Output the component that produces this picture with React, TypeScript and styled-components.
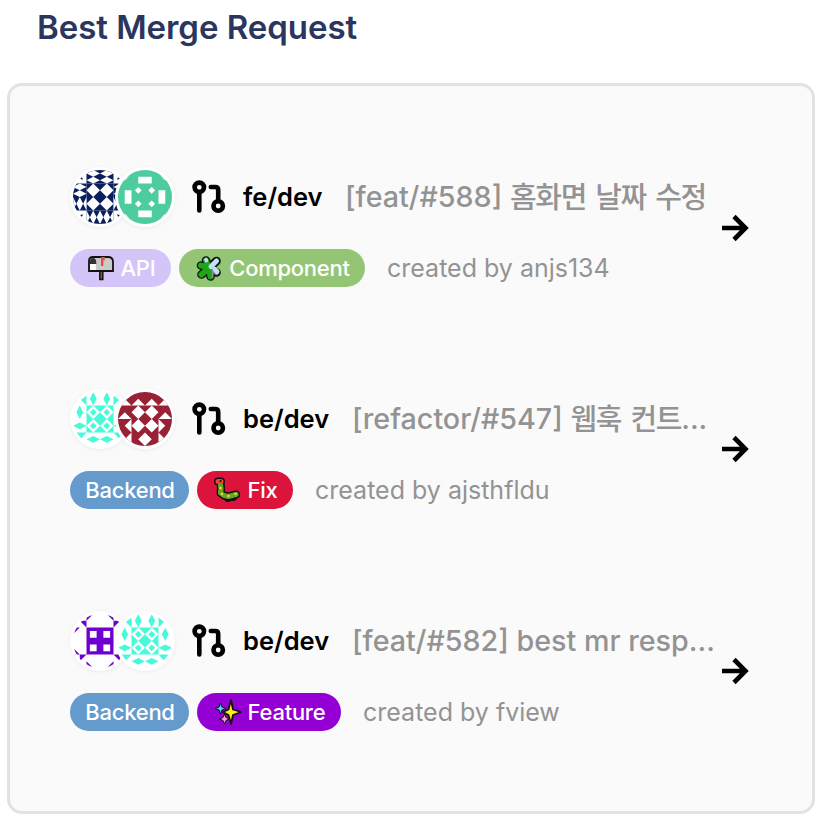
import React from "react";
import styled, { createGlobalStyle } from "styled-components";

const GlobalStyle = createGlobalStyle`
  * { box-sizing: border-box; }
  body {
    margin: 0;
    background: #fff;
    font-family: Inter, "Noto Sans CJK KR", sans-serif;
  }
`;

const Page = styled.main`
  width: 834px;
  height: 825px;
  padding: 0 19px 0 7px;
  overflow: hidden;
`;

const Heading = styled.h1`
  margin: 0;
  height: 83px;
  padding: 7px 0 0 30px;
  color: #2b365e;
  font-size: 33px;
  line-height: 40px;
  font-weight: 600;
  letter-spacing: -0.04px;
`;

const Card = styled.section`
  height: 731px;
  padding: 81px 60px 0;
  border: 3px solid #e2e2e2;
  border-radius: 15px;
  background: #fafafa;
`;

const Request = styled.article`
  display: flex;
  align-items: center;
  justify-content: space-between;
  width: 679px;
  height: 120px;
  margin-bottom: 102px;
`;

const Details = styled.div`
  display: flex;
  flex-direction: column;
  gap: 22px;
  width: 645px;
  white-space: nowrap;
`;

const TopLine = styled.div`
  display: flex;
  align-items: center;
  height: 60px;
`;

const Avatars = styled.div`
  display: flex;
  width: 105px;
  margin-right: 16px;
  flex: none;
`;

const Avatar = styled.div`
  width: 60px;
  height: 60px;
  flex: none;
  padding: 3px;
  border-radius: 50%;
  background: #fff;
  box-shadow: 0 1px 4px rgba(0, 0, 0, 0.06);

  & + & { margin-left: -15px; }

  svg {
    display: block;
    width: 54px;
    height: 54px;
    border-radius: 50%;
  }
`;

const MergeIcon = styled.svg`
  width: 36px;
  height: 36px;
  flex: none;
  margin-right: 16px;
`;

const Branch = styled.strong<{ $width: number }>`
  width: ${(p) => p.$width}px;
  margin-right: 23px;
  flex: none;
  color: #000;
  font-size: 25.5px;
  line-height: 36px;
  font-weight: 600;
`;

const Title = styled.span`
  color: #939393;
  font-size: 28.7px;
  line-height: 40px;
  font-weight: 450;
`;

const Hangul = styled.span`
  font-family: "Noto Sans CJK KR", sans-serif;
  font-size: 29px;
  line-height: 30px;
  letter-spacing: -1.3px;
  word-spacing: 4px;
  font-weight: 500;
  vertical-align: -1px;
`;

const BottomLine = styled.div`
  display: flex;
  align-items: center;
  gap: 8px;
  height: 38px;
`;

const Pill = styled.span<{ $color: string; $width: number }>`
  display: flex;
  align-items: center;
  justify-content: center;
  gap: 6px;
  width: ${(p) => p.$width}px;
  height: 38px;
  padding-left: 1px;
  flex: none;
  border-radius: 19px;
  background: ${(p) => p.$color};
  color: #fff;
  font-size: 22px;
  font-weight: 500;
  letter-spacing: -0.25px;

  svg { width: 28px; height: 28px; flex: none; }
`;

const Author = styled.span`
  margin-left: 14px;
  color: #939393;
  font-size: 25px;
  line-height: 36px;
`;

const ArrowIcon = styled.svg`
  width: 28px;
  height: 28px;
  flex: none;

  ${Request}:first-child & { margin-top: 1px; }
`;

type Corner = [number, number, number, number];
const quadrants: Corner[] = [[1, 1, 0, 0], [-1, 1, 80, 0], [1, -1, 0, 80], [-1, -1, 80, 80]];

function Mirrored({ children, rows }: { children: React.ReactNode; rows?: "top" | "bottom" }) {
  const list = rows === "top" ? quadrants.slice(0, 2) : rows === "bottom" ? quadrants.slice(2) : quadrants;
  return (
    <>
      {list.map(([sx, sy, x, y], i) => (
        <g key={i} transform={`translate(${x} ${y}) scale(${sx} ${sy})`}>{children}</g>
      ))}
    </>
  );
}

function Navy() {
  return (
    <svg viewBox="0 0 80 80">
      <rect width="80" height="80" fill="#fff" />
      <rect x="20" y="20" width="40" height="40" fill="#0a1f5c" />
      <Mirrored><path d="M30 20L40 30L30 40L20 30Z" fill="#fff" /></Mirrored>
      <Mirrored rows="top">
        <path d="M20 0h20v20H20zM0 20h20v20H0z" fill="#0a1f5c" />
        <path d="M20 5L30 0L40 5L30 10ZM20 15L30 10L40 15L30 20ZM0 25L10 20L20 25L10 30ZM0 35L10 30L20 35L10 40Z" fill="#fff" />
        <path d="M8 11l4-2l3 5l-2 0Z" fill="#0a1f5c" />
      </Mirrored>
      <Mirrored rows="bottom">
        <path d="M20 0h20v20H20zM0 20h20v20H0z" fill="#0a1f5c" />
        <path d="M20 0L25 10L20 20ZM30 0L35 10L30 20L25 10ZM40 0V20L35 10ZM0 20L5 30L0 40ZM10 20L15 30L10 40L5 30ZM20 20V40L15 30Z" fill="#fff" />
        <path d="M8 11l4-2l3 5l-2 0Z" fill="#0a1f5c" />
      </Mirrored>
    </svg>
  );
}

function Green() {
  return (
    <svg viewBox="0 0 80 80">
      <rect width="80" height="80" fill="#4dcd9d" />
      <path d="M30 10h20v10H30zM30 60h20v10H30zM10 30h10v20H10zM60 30h10v20H60z" fill="#fff" />
      <Mirrored>
        <path d="M30 25l5 5l-5 5l-5-5ZM6 15l5-5h4l-5 5ZM11 10l5-5v4l-5 6Z" fill="#fff" />
      </Mirrored>
    </svg>
  );
}

function Cyan() {
  return (
    <svg viewBox="0 0 80 80">
      <rect width="80" height="80" fill="#fff" />
      <rect x="20" y="20" width="40" height="40" fill="#48fada" />
      <Mirrored>
        <path d="M30 20L40 30L30 40L20 30Z" fill="#fff" />
        <path d="M30 25L35 30L30 35L25 30Z" fill="#48fada" />
      </Mirrored>
      <Mirrored rows="top">
        <path d="M30 0L35 10L30 20L25 10ZM10 20L15 30L10 40L5 30ZM20 3V20L10 10Z" fill="#48fada" />
      </Mirrored>
      <Mirrored rows="bottom">
        <path d="M20 10L30 5L40 10L30 15ZM0 30L10 25L20 30L10 35ZM5 20H20L12 11Z" fill="#48fada" />
      </Mirrored>
    </svg>
  );
}

function Maroon() {
  return (
    <svg viewBox="0 0 80 80">
      <rect width="80" height="80" fill="#982136" />
      <Mirrored><path d="M30 20L40 30L30 40L20 30Z" fill="#fff" /></Mirrored>
      <Mirrored rows="top">
        <path d="M20 20H40L30 10ZM0 40H20L10 30ZM3 20H20L10 10Z" fill="#fff" />
      </Mirrored>
      <Mirrored rows="bottom">
        <path d="M40 0V20L30 10ZM20 20V40L10 30ZM20 3V20L10 10Z" fill="#fff" />
      </Mirrored>
    </svg>
  );
}

function Purple() {
  return (
    <svg viewBox="0 0 80 80">
      <rect width="80" height="80" fill="#fff" />
      <rect x="20" y="20" width="40" height="40" fill="#6d00cc" />
      <Mirrored>
        <path d="M25 25h10v10H25z" fill="#fff" />
      </Mirrored>
      <Mirrored rows="top">
        <path d="M20 0H30L20 10ZM10 20L0 30V20ZM20 10V20L10 10Z" fill="#6d00cc" />
      </Mirrored>
      <Mirrored rows="bottom">
        <path d="M20 0V10L30 0ZM0 20V30L10 20ZM10 20H20L10 10Z" fill="#6d00cc" />
      </Mirrored>
    </svg>
  );
}

const Mailbox = () => (
  <svg viewBox="0 0 28 28">
    <path d="M12.8 16h3v9.5h-3z" fill="#92552d" stroke="#111" strokeWidth="1.5" />
    <path d="M2 17V7q0-4 4-4h15q5 0 5 5v9Z" fill="#cacaca" stroke="#111" strokeWidth="1.8" />
    <path d="M2.8 9q0-5 3.2-5t3.3 5v1H2.8Z" fill="#333" />
    <path d="M3 10h6v6H3z" fill="#fff" />
    <path d="M14 3h3.8v3.2h-1.5V12H14Z" fill="#ef4937" />
  </svg>
);

const Puzzle = () => (
  <svg viewBox="0 0 28 28" fill="none" strokeLinecap="round" strokeLinejoin="round">
    <path d="M11 6.5L14 14L21.5 7M6 11.5L14 14L21.5 18.5M6.5 20.5L14 14L15.5 22.5" stroke="#111" strokeWidth="8.6" />
    <path d="M14 14L21.5 18.5" stroke="#7d8783" strokeWidth="5.2" />
    <path d="M11 6.5L14 14M6 11.5L14 14M6.5 20.5L14 14L15.5 22.5" stroke="#1fa518" strokeWidth="6" />
    <path d="M16 12.5L21.5 7M20 15.5l2 2" stroke="#bfe2f6" strokeWidth="5" />
    <path d="M11 5.7l.4 1" stroke="#bfe2f6" strokeWidth="3.6" />
    <path d="M17.5 17v6" stroke="#85908a" strokeWidth="1.8" />
  </svg>
);

const Bug = () => (
  <svg viewBox="0 0 28 28" strokeLinecap="round" strokeLinejoin="round" fill="none">
    <path d="M7.500 5.500L8 12L7.500 17L11 19.500L15.500 20.500L19 19.500L23 18.500M5 5.500h3M15 21.500v.5M20 20.500v.5" stroke="#111" strokeWidth="8" />
    <path d="M7.500 9L8 13L7.500 17L11 19.500L15.500 20.500L19 19.500L23 18.500" stroke="#68a51d" strokeWidth="5.200" />
    <path d="M5 5.500h3" stroke="#e8482b" strokeWidth="5" />
    <circle cx="7.500" cy="5" r="1" fill="#111" />
    <g fill="#ecd64b">
      <circle cx="7.500" cy="12" r="1.300" />
      <circle cx="9" cy="18" r="1.300" />
      <circle cx="15.500" cy="20" r="1.300" />
      <circle cx="22.500" cy="18" r="1.300" />
    </g>
  </svg>
);

const Sparkles = () => (
  <svg viewBox="0 0 28 28" stroke="#111" strokeLinejoin="round">
    <path d="M17 2l2 9.5L27 14l-8 3L17 26l-2.5-9L9 14l5.5-2.5Z" fill="#ffef16" strokeWidth="1.8" />
    <path d="M6.5 5l1.500 4L12 10.500l-4 1.500L6.500 16l-1.500-4L1 10.500l4-1.500Z" fill="#56ccf0" strokeWidth="1" />
    <path d="M10.500 16l1.500 3.500l3.500 1.500l-3.500 1.500L10.500 26l-1.500-3.500L5.500 21l3.500-1.500Z" fill="#f5a2d0" strokeWidth="1" />
  </svg>
);

type Label = { text: string; color: string; width: number; icon?: React.ReactNode };
type Item = { avatars: React.ReactNode[]; branch: string; branchWidth: number; title: string; korean?: string; tail?: string; labels: Label[]; author: string };

const backend: Label = { text: "Backend", color: "#659acd", width: 119 };

const requests: Item[] = [
  {
    avatars: [<Navy />, <Green />], branch: "fe/dev", branchWidth: 79,
    title: "[feat/#588] ", korean: "홈화면 날짜 수정", author: "anjs134",
    labels: [
      { text: "API", color: "#d4c5f9", width: 101, icon: <Mailbox /> },
      { text: "Component", color: "#94c575", width: 186, icon: <Puzzle /> },
    ],
  },
  {
    avatars: [<Cyan />, <Maroon />], branch: "be/dev", branchWidth: 86,
    title: "[refactor/#547] ", korean: "웹훅 컨트", tail: "...", author: "ajsthfldu",
    labels: [backend, { text: "Fix", color: "#dc143c", width: 96, icon: <Bug /> }],
  },
  {
    avatars: [<Purple />, <Cyan />], branch: "be/dev", branchWidth: 86,
    title: "[feat/#582] best mr resp...", author: "fview",
    labels: [backend, { text: "Feature", color: "#9400d3", width: 144, icon: <Sparkles /> }],
  },
];

export default function App() {
  return (
    <>
      <GlobalStyle />
      <Page>
        <Heading>Best Merge Request</Heading>
        <Card>
          {requests.map((r) => (
            <Request key={r.author}>
              <Details>
                <TopLine>
                  <Avatars>{r.avatars.map((a, i) => <Avatar key={i}>{a}</Avatar>)}</Avatars>
                  <MergeIcon viewBox="0 0 36 36" fill="none" stroke="#000" strokeWidth="4.6" strokeLinecap="round">
                    <circle cx="8.3" cy="8.3" r="4.7" />
                    <path d="M8.3 13v18.5M19.8 8h4.4q3 0 3 3v11" />
                    <circle cx="27.2" cy="27" r="4.7" />
                  </MergeIcon>
                  <Branch $width={r.branchWidth}>{r.branch}</Branch>
                  <Title>{r.title}{r.korean && <Hangul>{r.korean}</Hangul>}{r.tail}</Title>
                </TopLine>
                <BottomLine>
                  {r.labels.map((l) => (
                    <Pill key={l.text} $color={l.color} $width={l.width}>{l.icon}{l.text}</Pill>
                  ))}
                  <Author>created by {r.author}</Author>
                </BottomLine>
              </Details>
              <ArrowIcon viewBox="0 0 28 28" fill="none" stroke="#000" strokeWidth="4.6">
                <path d="M1 14h23.500M13 2.500L24.500 14L13 25.500" />
              </ArrowIcon>
            </Request>
          ))}
        </Card>
      </Page>
    </>
  );
}
